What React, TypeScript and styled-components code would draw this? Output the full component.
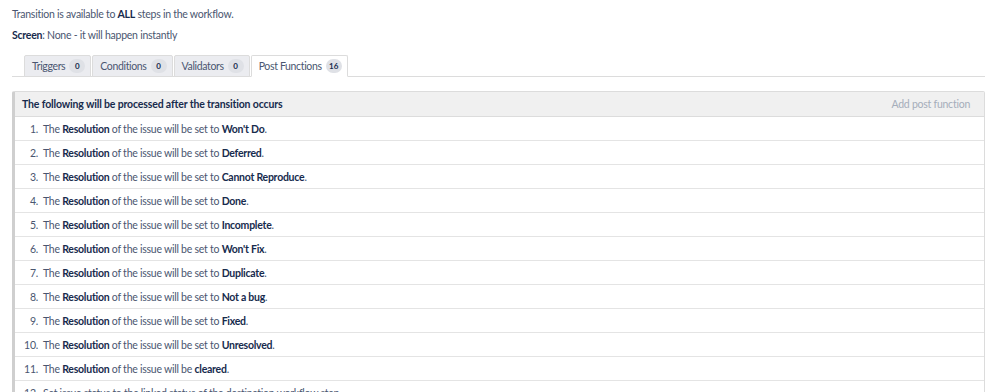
import React from 'react';
import styled, { createGlobalStyle } from 'styled-components';

const GlobalStyle = createGlobalStyle`
    body {
        margin: 0;
        background: #ffffff;
        font-family: Lato, "Open Sans", sans-serif;
        font-size: 10.5px;
        letter-spacing: -0.25px;
        color: #4a5670;
    }
`;

const Page = styled.div`
    padding: 7px 14px 0 12px;
`;

const Line = styled.p`
    margin: 0 0 7px 0;
    line-height: 14px;
`;

const Strong = styled.b`
    font-weight: 700;
    color: #172b4d;
`;

const TabStrip = styled.div`
    display: flex;
    margin-top: 13px;
    padding-left: 12px;
    border-bottom: 1px solid #dcdcdc;
`;

const Tab = styled.div<{ $active?: boolean }>`
    display: flex;
    align-items: center;
    gap: 4px;
    height: 20px;
    padding: 0 5px 0 7px;
    margin-right: 1px;
    margin-bottom: -1px;
    background: ${p => (p.$active ? '#ffffff' : '#ebecf0')};
    border: 1px solid #dcdcdc;
    border-bottom-color: ${p => (p.$active ? '#ffffff' : '#dcdcdc')};
    border-radius: 2px 2px 0 0;
    color: #4a5670;
    letter-spacing: -0.35px;
`;

const Badge = styled.span`
    display: inline-flex;
    align-items: center;
    justify-content: center;
    min-width: 16px;
    height: 14px;
    padding: 0 3px;
    box-sizing: border-box;
    border-radius: 8px;
    background: #dfe1e6;
    color: #172b4d;
    font-size: 8px;
    font-weight: 700;
    letter-spacing: 0;
`;

const Panel = styled.div`
    margin-top: 14px;
    border: 1px solid #dcdcdc;
    border-left: 3px solid #cfcfcf;
    border-radius: 2px 2px 0 0;
`;

const PanelHeader = styled.div`
    display: flex;
    justify-content: space-between;
    align-items: center;
    height: 24px;
    padding: 0 14px 0 7px;
    background: #f0f0f0;
    border-bottom: 1px solid #dcdcdc;
`;

const Title = styled.span`
    font-weight: 700;
    color: #172b4d;
    letter-spacing: -0.15px;
`;

const AddLink = styled.span`
    color: #a5adba;
`;

const Row = styled.div`
    display: flex;
    align-items: center;
    height: 23px;
    border-bottom: 1px solid #e4e4e4;
`;

const Num = styled.span`
    width: 23px;
    text-align: right;
    margin-right: 5px;
`;

const tabs = [
    { label: 'Triggers', count: 0 },
    { label: 'Conditions', count: 0 },
    { label: 'Validators', count: 0 },
    { label: 'Post Functions', count: 16 },
];

const items: { lead: string; value: string }[] = [
    { lead: 'set to', value: "Won't Do" },
    { lead: 'set to', value: 'Deferred' },
    { lead: 'set to', value: 'Cannot Reproduce' },
    { lead: 'set to', value: 'Done' },
    { lead: 'set to', value: 'Incomplete' },
    { lead: 'set to', value: "Won't Fix" },
    { lead: 'set to', value: 'Duplicate' },
    { lead: 'set to', value: 'Not a bug' },
    { lead: 'set to', value: 'Fixed' },
    { lead: 'set to', value: 'Unresolved' },
    { lead: '', value: 'cleared' },
];

export default function App() {
    return (
        <>
            <GlobalStyle />
            <Page>
                <Line>Transition is available to <Strong>ALL</Strong> steps in the workflow.</Line>
                <Line><Strong>Screen</Strong>: None - it will happen instantly</Line>
                <TabStrip>
                    {tabs.map((tab, index) => (
                        <Tab key={tab.label} $active={index === tabs.length - 1}>
                            <span>{tab.label}</span>
                            <Badge>{tab.count}</Badge>
                        </Tab>
                    ))}
                </TabStrip>
                <Panel>
                    <PanelHeader>
                        <Title>The following will be processed after the transition occurs</Title>
                        <AddLink>Add post function</AddLink>
                    </PanelHeader>
                    {items.map((item, index) => (
                        <Row key={index}>
                            <Num>{index + 1}.</Num>
                            <span>
                                The <Strong>Resolution</Strong> of the issue will be{item.lead ? ' ' + item.lead : ''} <Strong>{item.value}</Strong>.
                            </span>
                        </Row>
                    ))}
                    <Row>
                        <Num>12.</Num>
                        <span>Set issue status to the linked status of the destination workflow step.</span>
                    </Row>
                </Panel>
            </Page>
        </>
    );
}
